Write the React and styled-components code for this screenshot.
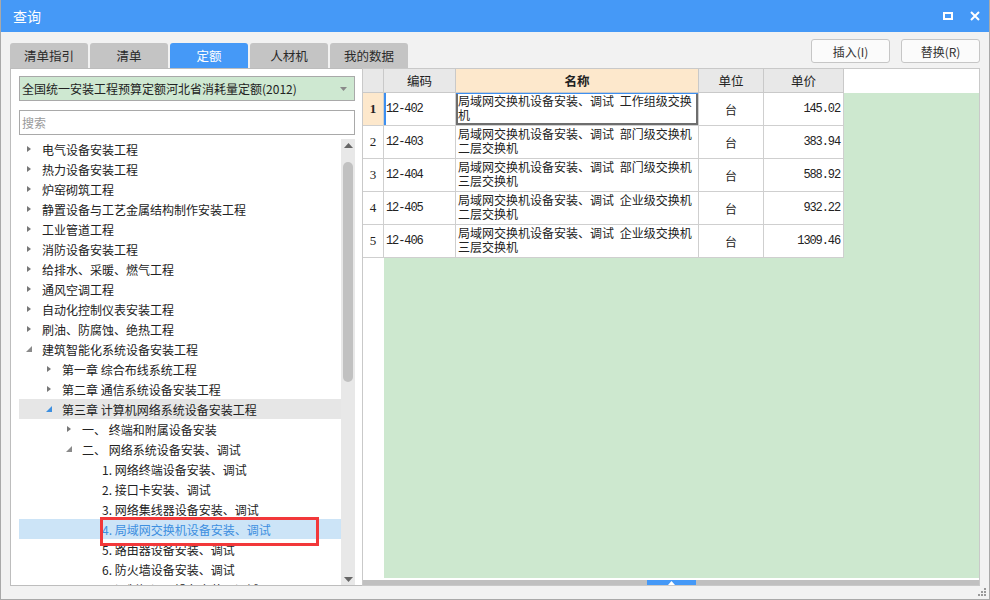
import React from "react";
import styled, { createGlobalStyle } from "styled-components";

const GlobalStyle = createGlobalStyle`
  * { box-sizing: border-box; }
  html, body { margin: 0; padding: 0; background: #fff; }
  body {
    font-family: "Noto Sans CJK SC", "Noto Sans", sans-serif;
    font-size: 12px;
    color: #222;
  }
`;

const Window = styled.div`
  position: relative;
  width: 990px;
  height: 600px;
  display: flex;
  flex-direction: column;
  background: #f2f2f2;
  border: 1px solid #a9a9a9;
  border-top: none;
  overflow: hidden;
`;

const TitleBar = styled.div`
  height: 32px;
  flex: none;
  background: #4599f7;
  color: #fff;
  display: flex;
  align-items: center;
  padding: 0 9px 0 12px;
  font-size: 14px;
`;

const WinButtons = styled.div`
  margin-left: auto;
  display: flex;
  align-items: center;
  gap: 17px;
`;

const Body = styled.div`
  flex: 1;
  min-height: 0;
  display: flex;
  flex-direction: column;
  padding: 0 9px 13px 9px;
`;

const Toolbar = styled.div`
  height: 36px;
  flex: none;
  display: flex;
`;

const Tabs = styled.div`
  display: flex;
  gap: 2px;
  align-self: flex-end;
`;

const Tab = styled.div`
  width: 78px;
  height: 25px;
  border-radius: 3px 3px 0 0;
  background: ${(p) => (p.$active ? "#4599f7" : "#c4c4c4")};
  color: ${(p) => (p.$active ? "#fff" : "#2a2a2a")};
  display: flex;
  align-items: center;
  justify-content: center;
  font-size: 12.5px;
`;

const Actions = styled.div`
  margin-left: auto;
  display: flex;
  gap: 11px;
  padding-top: 7px;
`;

const Button = styled.div`
  width: 79px;
  height: 24px;
  border: 1px solid #c6c6c6;
  border-radius: 3px;
  background: #fbfbfb;
  color: #333;
  display: flex;
  align-items: center;
  justify-content: center;
  font-size: 12px;
`;

const Content = styled.div`
  flex: 1;
  min-height: 0;
  display: flex;
`;

const LeftPanel = styled.div`
  width: 352px;
  flex: none;
  background: #fff;
  border: 1px solid #bdbdbd;
  border-right: none;
  padding: 7px 7px 0 8px;
  display: flex;
  flex-direction: column;
`;

const Combo = styled.div`
  height: 25px;
  flex: none;
  background: #cee8d1;
  border: 1px solid #a9a9a9;
  display: flex;
  align-items: center;
  padding: 0 7px 0 2px;
  white-space: nowrap;
`;

const ComboArrow = styled.svg`
  margin-left: auto;
`;

const Search = styled.div`
  margin-top: 9px;
  height: 25px;
  flex: none;
  border: 1px solid #a9a9a9;
  padding: 0 2px;
  color: #9a9a9a;
  display: flex;
  align-items: center;
`;

const TreeWrap = styled.div`
  margin-top: 4px;
  flex: 1;
  min-height: 0;
  display: flex;
  overflow: hidden;
`;

const TreeList = styled.div`
  position: relative;
  flex: 1;
  overflow: hidden;
`;

const TreeRow = styled.div`
  height: 20px;
  display: flex;
  align-items: center;
  padding-left: ${(p) => 7 + p.$level * 20}px;
  white-space: nowrap;
  background: ${(p) => (p.$selected ? "#cce4f7" : p.$hover ? "#e6e6e6" : "transparent")};
  color: ${(p) => (p.$selected ? "#3d8fe0" : "#222")};
`;

const Toggle = styled.span`
  width: 6px;
  height: 8px;
  margin-right: 10px;
  display: flex;
  align-items: center;
  flex: none;
`;

const RedMark = styled.div`
  position: absolute;
  left: 81px;
  top: 378px;
  width: 219px;
  height: 29px;
  border: 3px solid #f2383a;
  pointer-events: none;
`;

const VScroll = styled.div`
  width: 14px;
  flex: none;
  background: #e8e8e8;
  display: flex;
  flex-direction: column;
`;

const ScrollArrow = styled.div`
  height: 12px;
  flex: none;
  display: flex;
  align-items: center;
  justify-content: center;
  margin-top: ${(p) => (p.$down ? "auto" : "0")};
`;

const Thumb = styled.div`
  margin: 11px 2px 0;
  height: 220px;
  border-radius: 5px;
  background: #c1c1c1;
`;

const RightPanel = styled.div`
  flex: 1;
  min-width: 0;
  background: #fff;
  border: 1px solid #c9c9c9;
  display: flex;
  flex-direction: column;
`;

const HeaderRow = styled.div`
  height: 24px;
  flex: none;
  display: flex;
`;

const HeadCell = styled.div`
  width: ${(p) => p.$w}px;
  flex: none;
  border-right: 1px solid #c9c9c9;
  border-bottom: 1px solid #c9c9c9;
  background: ${(p) => (p.$accent ? "#fde8cc" : "#e8e8e8")};
  font-weight: ${(p) => (p.$accent ? 700 : 400)};
  display: flex;
  align-items: center;
  justify-content: center;
  font-size: 12.5px;
`;

const GridBody = styled.div`
  flex: 1;
  min-height: 0;
  background: linear-gradient(to right, #fff 21px, #cde8cf 21px);
`;

const Row = styled.div`
  height: 33px;
  display: flex;
`;

const Cell = styled.div`
  width: ${(p) => p.$w}px;
  flex: none;
  background: #fff;
  border-right: 1px solid #cfcfcf;
  border-bottom: 1px solid #cfcfcf;
  display: flex;
  align-items: center;
`;

const NumCell = styled(Cell)`
  justify-content: center;
  font-family: "Liberation Serif", "DejaVu Serif", serif;
  font-size: 13px;
  background: ${(p) => (p.$active ? "#fde8cc" : "#fff")};
  font-weight: ${(p) => (p.$active ? 700 : 400)};
`;

const CodeCell = styled(Cell)`
  padding-left: 2px;
  font-family: "Liberation Mono", "DejaVu Sans Mono", monospace;
  font-size: 12px;
  letter-spacing: -1.1px;
  box-shadow: ${(p) => (p.$active ? "inset 2px 0 0 #3d8ff0" : "none")};
`;

const NameCell = styled(Cell)`
  align-items: flex-start;
  padding: 1px 1px 0 2px;
  line-height: 14px;
  word-break: break-all;
  word-spacing: 3px;
  overflow: hidden;
  box-shadow: ${(p) =>
    p.$active
      ? "inset 0 1px 0 #3d8ff0, inset 2px 0 0 #6e6e6e, inset -2px 0 0 #6e6e6e, inset 0 -2px 0 #6e6e6e"
      : "none"};
`;

const UnitCell = styled(Cell)`
  justify-content: center;
`;

const PriceCell = styled(Cell)`
  justify-content: flex-end;
  padding-right: 3px;
  font-family: "Liberation Mono", "DejaVu Sans Mono", monospace;
  font-size: 12px;
  letter-spacing: -1.1px;
`;

const HScroll = styled.div`
  height: 5px;
  flex: none;
  margin-top: 2px;
  background: #c0c0c0;
  display: flex;
  justify-content: center;
`;

const HThumb = styled.div`
  width: 49px;
  background: #4599f7;
  display: flex;
  align-items: center;
  justify-content: center;
`;

const Grip = styled.svg`
  position: absolute;
  right: 3px;
  bottom: 3px;
`;

const tree = [
  { l: 0, t: "电气设备安装工程", s: "closed" },
  { l: 0, t: "热力设备安装工程", s: "closed" },
  { l: 0, t: "炉窑砌筑工程", s: "closed" },
  { l: 0, t: "静置设备与工艺金属结构制作安装工程", s: "closed" },
  { l: 0, t: "工业管道工程", s: "closed" },
  { l: 0, t: "消防设备安装工程", s: "closed" },
  { l: 0, t: "给排水、采暖、燃气工程", s: "closed" },
  { l: 0, t: "通风空调工程", s: "closed" },
  { l: 0, t: "自动化控制仪表安装工程", s: "closed" },
  { l: 0, t: "刷油、防腐蚀、绝热工程", s: "closed" },
  { l: 0, t: "建筑智能化系统设备安装工程", s: "open" },
  { l: 1, t: "第一章 综合布线系统工程", s: "closed" },
  { l: 1, t: "第二章 通信系统设备安装工程", s: "closed" },
  { l: 1, t: "第三章 计算机网络系统设备安装工程", s: "open", hover: true },
  { l: 2, t: "一、 终端和附属设备安装", s: "closed" },
  { l: 2, t: "二、 网络系统设备安装、调试", s: "open" },
  { l: 3, t: "1. 网络终端设备安装、调试" },
  { l: 3, t: "2. 接口卡安装、调试" },
  { l: 3, t: "3. 网络集线器设备安装、调试" },
  { l: 3, t: "4. 局域网交换机设备安装、调试", selected: true },
  { l: 3, t: "5. 路由器设备安装、调试" },
  { l: 3, t: "6. 防火墙设备安装、调试" },
  { l: 3, t: "7. 调制解调器设备安装、调试" },
];

const rows = [
  { code: "12-402", name: "局域网交换机设备安装、调试 工作组级交换机", price: "145.02" },
  { code: "12-403", name: "局域网交换机设备安装、调试 部门级交换机二层交换机", price: "383.94" },
  { code: "12-404", name: "局域网交换机设备安装、调试 部门级交换机三层交换机", price: "588.92" },
  { code: "12-405", name: "局域网交换机设备安装、调试 企业级交换机二层交换机", price: "932.22" },
  { code: "12-406", name: "局域网交换机设备安装、调试 企业级交换机三层交换机", price: "1309.46" },
];

const cols = { num: 21, code: 72, name: 243, unit: 65, price: 80 };

const Arrow = ({ state, blue }) => (
  <Toggle>
    {state === "closed" && (
      <svg width="6" height="8" viewBox="0 0 6 8">
        <polygon points="1,1 5,4 1,7" fill="#777" />
      </svg>
    )}
    {state === "open" && (
      <svg width="6" height="8" viewBox="0 0 6 8">
        <polygon points="6,1 6,7 0,7" fill={blue ? "#3d8fe0" : "#8a8a8a"} />
      </svg>
    )}
  </Toggle>
);

const tabs = ["清单指引", "清单", "定额", "人材机", "我的数据"];

const App = () => {
  return (
    <Window>
      <GlobalStyle />
      <TitleBar>
        查询
        <WinButtons>
          <svg width="10" height="8" viewBox="0 0 10 8">
            <rect x="1" y="1" width="8" height="6" fill="none" stroke="#fff" strokeWidth="2" />
          </svg>
          <svg width="10" height="10" viewBox="0 0 10 10">
            <path d="M1 1 L9 9 M9 1 L1 9" stroke="#fff" strokeWidth="2" />
          </svg>
        </WinButtons>
      </TitleBar>
      <Body>
        <Toolbar>
          <Tabs>
            {tabs.map((t) => (
              <Tab key={t} $active={t === "定额"}>{t}</Tab>
            ))}
          </Tabs>
          <Actions>
            <Button>插入(I)</Button>
            <Button>替换(R)</Button>
          </Actions>
        </Toolbar>
        <Content>
          <LeftPanel>
            <Combo>
              全国统一安装工程预算定额河北省消耗量定额(2012)
              <ComboArrow width="7" height="4" viewBox="0 0 7 4">
                <polygon points="0,0 7,0 3.5,4" fill="#8a8a8a" />
              </ComboArrow>
            </Combo>
            <Search>搜索</Search>
            <TreeWrap>
              <TreeList>
                {tree.map((n) => (
                  <TreeRow key={n.t} $level={n.l} $hover={n.hover} $selected={n.selected}>
                    <Arrow state={n.s} blue={n.hover} />
                    {n.t}
                  </TreeRow>
                ))}
                <RedMark />
              </TreeList>
              <VScroll>
                <ScrollArrow>
                  <svg width="9" height="5" viewBox="0 0 9 5">
                    <polygon points="0,5 4.5,0 9,5" fill="#666" />
                  </svg>
                </ScrollArrow>
                <Thumb />
                <ScrollArrow $down>
                  <svg width="9" height="5" viewBox="0 0 9 5">
                    <polygon points="0,0 9,0 4.5,5" fill="#666" />
                  </svg>
                </ScrollArrow>
              </VScroll>
            </TreeWrap>
          </LeftPanel>
          <RightPanel>
            <HeaderRow>
              <HeadCell $w={cols.num} />
              <HeadCell $w={cols.code}>编码</HeadCell>
              <HeadCell $w={cols.name} $accent>名称</HeadCell>
              <HeadCell $w={cols.unit}>单位</HeadCell>
              <HeadCell $w={cols.price}>单价</HeadCell>
            </HeaderRow>
            <GridBody>
              {rows.map((r, i) => (
                <Row key={r.code}>
                  <NumCell $w={cols.num} $active={i === 0}>{i + 1}</NumCell>
                  <CodeCell $w={cols.code} $active={i === 0}>{r.code}</CodeCell>
                  <NameCell $w={cols.name} $active={i === 0}>{r.name}</NameCell>
                  <UnitCell $w={cols.unit}>台</UnitCell>
                  <PriceCell $w={cols.price}>{r.price}</PriceCell>
                </Row>
              ))}
            </GridBody>
            <HScroll>
              <HThumb>
                <svg width="7" height="4" viewBox="0 0 7 4">
                  <polygon points="0,4 3.5,0 7,4" fill="#fff" />
                </svg>
              </HThumb>
            </HScroll>
          </RightPanel>
        </Content>
      </Body>
      <Grip width="9" height="9" viewBox="0 0 9 9">
        <rect x="7" y="1" width="2" height="2" fill="#999" />
        <rect x="4" y="4" width="2" height="2" fill="#999" />
        <rect x="7" y="4" width="2" height="2" fill="#999" />
        <rect x="1" y="7" width="2" height="2" fill="#999" />
        <rect x="4" y="7" width="2" height="2" fill="#999" />
        <rect x="7" y="7" width="2" height="2" fill="#999" />
      </Grip>
    </Window>
  );
};

export default App;
